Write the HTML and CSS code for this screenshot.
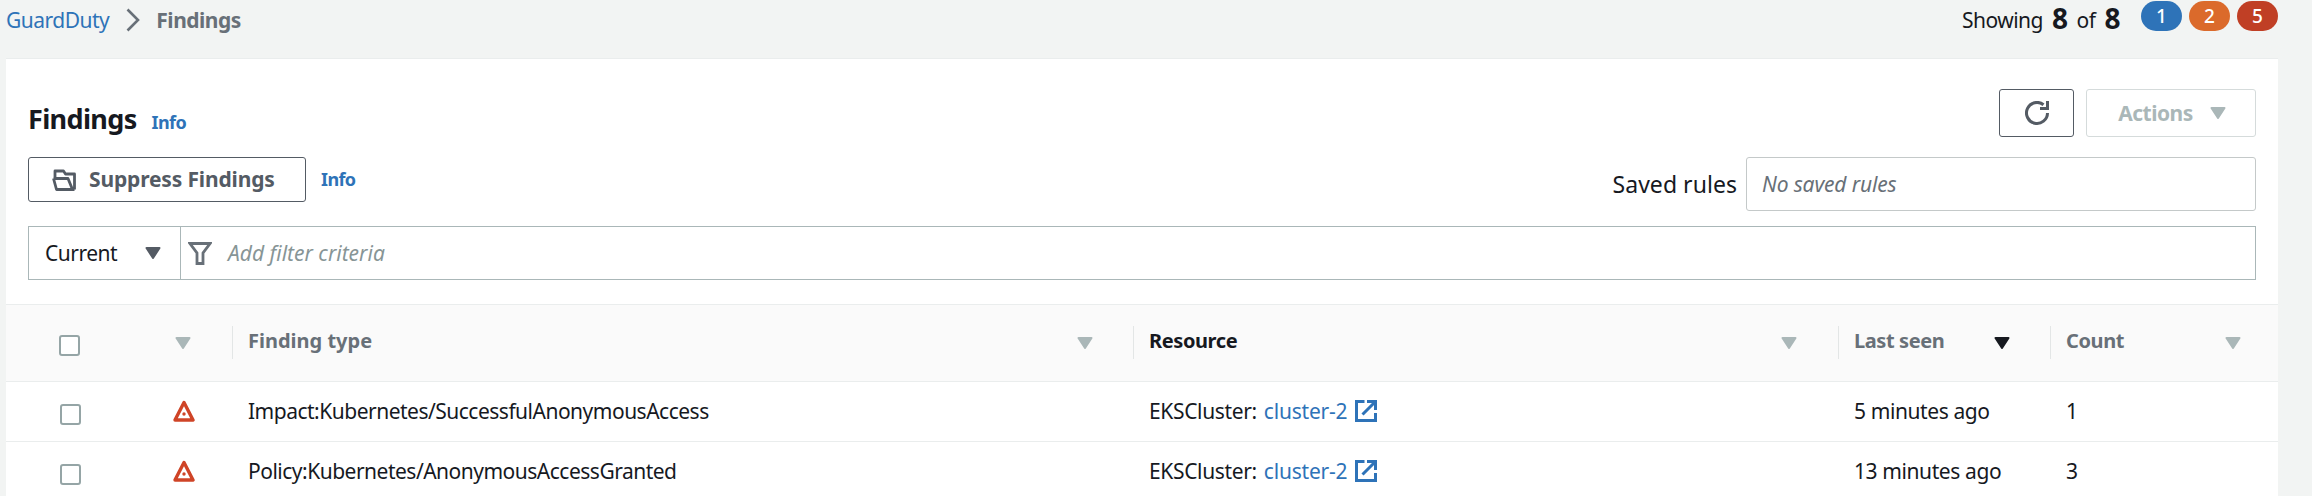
FILE: index.html
```html
<!DOCTYPE html>
<html lang="en">
<head>
<meta charset="utf-8">
<title>GuardDuty Findings</title>
<link rel="stylesheet" href="styles.css">
</head>
<body>
<svg class="defs" width="0" height="0">
  <symbol id="caret" viewBox="0 0 16 12"><path d="M1.500 1h13L8 11z" fill="currentColor" stroke="currentColor" stroke-width="2" stroke-linejoin="round"/></symbol>
  <symbol id="external" viewBox="0 0 22 22"><g fill="none" stroke="currentColor" stroke-width="3"><path d="M9.500 1.500H1.500v19h19V13M12 1.500h8.500V10M20 2L7.500 14.500"/></g></symbol>
  <symbol id="warning" viewBox="0 0 22 22"><path d="M11 2.500L20 20H2z" fill="none" stroke="currentColor" stroke-width="3.400" stroke-linejoin="round"/><circle cx="11" cy="14" r="1.700" fill="currentColor"/></symbol>
</svg>
<header class="topbar">
  <nav class="crumbs">
    <a>GuardDuty</a>
    <svg class="chevron" viewBox="0 0 14 24"><path d="M1.500 1.500L12 12 1.500 22.500" fill="none" stroke="currentColor" stroke-width="2.600"/></svg>
    <span class="here">Findings</span>
  </nav>
  <div class="summary">
    <span class="label">Showing</span><b>8</b><span class="label">of</span><b>8</b>
    <div class="pills"><span class="pill low">1</span><span class="pill medium">2</span><span class="pill high">5</span></div>
  </div>
</header>
<main class="panel">
  <div class="title-row">
    <h1>Findings</h1><a class="info">Info</a>
    <div class="buttons">
      <button class="btn refresh"><svg width="24" height="24" viewBox="0 0 24 24"><path d="M22.500 12A10.500 10.500 0 1 1 18.500 3.700" fill="none" stroke="currentColor" stroke-width="3"/><path d="M22.500 0v7.500H15" fill="none" stroke="currentColor" stroke-width="3"/></svg></button>
      <button class="btn actions"><span>Actions</span><svg class="caret"><use href="#caret"/></svg></button>
    </div>
  </div>
  <div class="rules-row">
    <button class="btn suppress"><svg width="24" height="22" viewBox="0 0 24 22"><path d="M3 9V2h8.500l2 3h9v15.500M1.500 9.500h14.500l4.500 11h2M1.500 9.500l3 11h16" fill="none" stroke="currentColor" stroke-width="2.800" stroke-linejoin="round"/></svg><span>Suppress Findings</span></button>
    <a class="info">Info</a>
    <label>Saved rules</label>
    <div class="select">No saved rules</div>
  </div>
  <div class="filter">
    <div class="current"><span>Current</span><svg class="caret"><use href="#caret"/></svg></div>
    <svg class="funnel" viewBox="0 0 24 23"><path d="M2 1.500h20l-7 9.500v10.500H9V11z" fill="none" stroke="currentColor" stroke-width="2.800"/></svg>
    <span class="placeholder">Add filter criteria</span>
  </div>
  <div class="table">
    <div class="row head">
      <div class="cell"><span class="box"></span></div>
      <div class="cell"><svg class="caret"><use href="#caret"/></svg></div>
      <div class="cell"><span class="t-type">Finding type</span><svg class="caret"><use href="#caret"/></svg></div>
      <div class="cell active"><span>Resource</span><svg class="caret"><use href="#caret"/></svg></div>
      <div class="cell sorted"><span>Last seen</span><svg class="caret"><use href="#caret"/></svg></div>
      <div class="cell"><span>Count</span><svg class="caret"><use href="#caret"/></svg></div>
    </div>
    <div class="row">
      <div class="cell"><span class="box"></span></div>
      <div class="cell"><svg class="warn"><use href="#warning"/></svg></div>
      <div class="cell"><span>Impact:Kubernetes/SuccessfulAnonymousAccess</span></div>
      <div class="cell"><span class="t-eks">EKSCluster:</span><a class="t-cluster">cluster-2</a><svg class="ext"><use href="#external"/></svg></div>
      <div class="cell"><span class="t-ago">5 minutes ago</span></div>
      <div class="cell"><span>1</span></div>
    </div>
    <div class="row">
      <div class="cell"><span class="box"></span></div>
      <div class="cell"><svg class="warn"><use href="#warning"/></svg></div>
      <div class="cell"><span>Policy:Kubernetes/AnonymousAccessGranted</span></div>
      <div class="cell"><span class="t-eks">EKSCluster:</span><a class="t-cluster">cluster-2</a><svg class="ext"><use href="#external"/></svg></div>
      <div class="cell"><span class="t-ago">13 minutes ago</span></div>
      <div class="cell"><span>3</span></div>
    </div>
  </div>
</main>
</body>
</html>
```
FILE: styles.css
```css
* { box-sizing: border-box; }
body { margin: 0; height: 496px; overflow: hidden; background: #f2f4f3; color: #16191f; font: 21px/30px "Noto Sans", sans-serif; letter-spacing: -0.5px; }
.defs { position: absolute; }
svg { display: block; flex: none; }
a { color: #2e73b8; }
span, a, b, label, h1 { white-space: nowrap; }
.topbar { height: 58px; padding: 0 34px 0 6px; display: flex; justify-content: space-between; align-items: flex-start; }
.crumbs { display: flex; align-items: center; padding-top: 5px; }
.chevron { width: 14px; height: 24px; margin: 0 16px 0 17px; color: #687078; }
.here { font-weight: 700; color: #687078; }
.summary { display: flex; align-items: flex-start; }
.summary .label { padding-top: 5px; }
.summary b { font-size: 28px; line-height: 36px; margin: 0 9px; }
.pills { display: flex; gap: 7px; margin-left: 12px; padding-top: 1px; }
.pill { width: 41px; height: 30px; border-radius: 15px; color: #fff; font-size: 19px; font-weight: 500; text-align: center; letter-spacing: 0; }
.low { background: #2e73b8; }
.medium { background: #db6a2b; }
.high { background: #c03f25; }
.panel { width: 2272px; height: 438px; margin-left: 6px; background: #fff; border-top: 1px solid #eaeded; }
.title-row { height: 98px; padding: 30px 22px 0 22px; display: flex; align-items: flex-start; }
h1 { margin: 13px 15px 0 0; font-size: 27px; line-height: 34px; letter-spacing: -0.65px; }
.info { font-size: 18px; font-weight: 700; letter-spacing: -0.6px; }
.title-row .info { margin-top: 18px; }
.buttons { display: flex; gap: 12px; margin-left: auto; }
.btn { font: inherit; font-weight: 700; letter-spacing: inherit; color: #545b64; background: #fff; border: 1px solid #545b64; border-radius: 3px; height: 48px; padding: 0; display: flex; align-items: center; justify-content: center; }
.refresh { width: 75px; }
.actions { width: 170px; gap: 17px; padding-left: 2px; color: #aab7b8; border-color: #d5dbdb; }
.caret { width: 16px; height: 12px; color: #aab7b8; }
.rules-row { height: 69px; padding: 0 22px; display: flex; align-items: flex-start; }
.suppress { width: 278px; height: 45px; gap: 13px; justify-content: flex-start; padding-left: 23px; letter-spacing: -0.15px; }
.suppress span { padding-bottom: 2px; }
.rules-row .info { margin: 7px 0 0 15px; }
label { margin: 12px 9px 0 auto; font-size: 23px; letter-spacing: 0.05px; }
.select { width: 510px; height: 54px; border: 1px solid #c4c9c9; border-radius: 3px; padding: 11px 0 0 15px; font-style: italic; letter-spacing: -0.15px; color: #687078; }
.filter { width: 2228px; height: 54px; margin-left: 22px; border: 1px solid #aab7b8; display: flex; align-items: center; }
.current { width: 152px; height: 52px; border-right: 1px solid #aab7b8; padding: 0 19px 0 16px; display: flex; align-items: center; justify-content: space-between; }
.current .caret { color: #545b64; }
.funnel { width: 24px; height: 23px; margin: 1px 16px 0 7px; color: #687078; }
.placeholder { font-style: italic; letter-spacing: 0; color: #879596; }
.table { margin-top: 24px; }
.row { display: grid; grid-template-columns: 148px 78px 901px 705px 212px 228px; height: 60px; border-bottom: 1px solid #eaeded; }
.cell { display: flex; padding: 14px 0 0 16px; align-items: flex-start; }
.row .cell:first-child { padding: 22px 0 0 54px; }
.row .cell:nth-child(2) { padding: 18px 0 0 19px; }
.head { height: 78px; background: #fafafa; border-top: 1px solid #eaeded; font-size: 20px; letter-spacing: -0.4px; font-weight: 700; color: #687078; padding-top: 21px; }
.row.head .cell { height: 33px; padding: 0 40px 0 15px; justify-content: space-between; }
.row.head .cell:nth-child(n+3) { border-left: 1px solid #e3e6e6; }
.row.head .cell:first-child { padding: 9px 0 0 53px; }
.row.head .cell:nth-child(2) { padding: 0 0 0 21px; }
.row.head .cell:last-child { padding-right: 37px; }
.head .caret { margin-top: 11px; }
.head .active, .sorted .caret { color: #16191f; }
.row.head .active { padding-right: 41px; }
.t-type { letter-spacing: 0; }
.box { width: 21px; height: 21px; border: 2px solid #95a5a6; border-radius: 3px; background: #fff; }
.warn, .ext { width: 22px; height: 22px; }
.warn { color: #cf4427; }
.ext { margin: 4px 0 0 8px; color: #2e73b8; }
.t-eks { margin-right: 7px; letter-spacing: -0.35px; }
.t-cluster { letter-spacing: -0.2px; }
.t-ago { letter-spacing: -0.4px; }
```
